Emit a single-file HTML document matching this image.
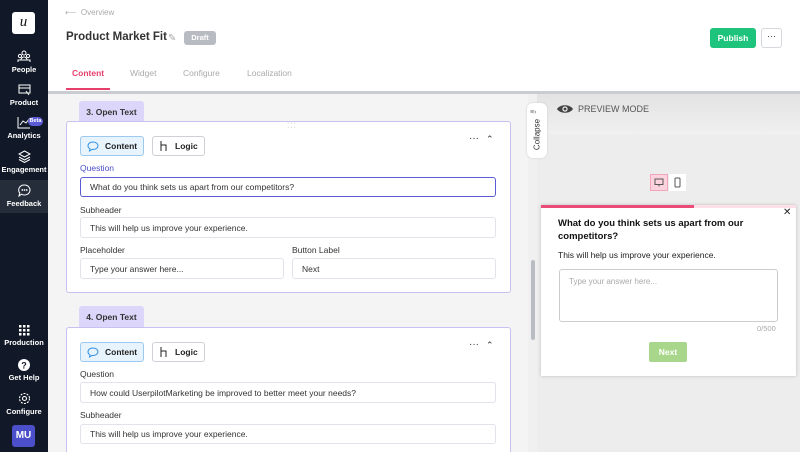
<!DOCTYPE html>
<html style="width:800px;height:452px;overflow:hidden"><head><style>
*{box-sizing:border-box;margin:0;padding:0}
body{width:800px;height:452px;overflow:hidden;font-family:"Liberation Sans",sans-serif;background:#f4f4f5;position:relative}
.a{position:absolute}
.sb{left:0;top:0;width:48px;height:452px;background:#111827}
.ni{position:absolute;left:0;width:48px;text-align:center;color:#fff;font-size:7.5px;font-weight:bold}
.ni svg{display:block;margin:0 auto 2px}
.lbl{font-size:8.5px;color:#333;position:absolute}
.inp{position:absolute;background:#fff;border:1px solid #e2e2ea;border-radius:3px;font-size:8.5px;color:#333;padding-left:9px;display:flex;align-items:center}
.btn{position:absolute;border:1px solid #cfcfd6;border-radius:3px;background:#fff;font-size:8.5px;font-weight:bold;color:#222;display:flex;align-items:center;padding-left:6px;gap:6px}
.tabl{position:absolute;background:#dcd6fa;border-radius:3px 3px 0 0;font-size:8.5px;font-weight:bold;color:#333;display:flex;align-items:center;justify-content:center}
.card{position:absolute;background:#fff;border:1px solid #c7c0f2;border-radius:3px}
</style></head><body>
<div class="a sb"></div>
<div class="a" style="left:12px;top:12px;width:23px;height:22px;background:#fff;border-radius:3px;font-family:'Liberation Serif',serif;font-style:italic;font-size:15px;text-align:center;line-height:20px;color:#111">u</div>
<div class="ni" style="top:50px"><svg width="14" height="13" viewBox="0 0 14 13" fill="none" stroke="#fff" stroke-width="1"><circle cx="7" cy="3" r="2"/><circle cx="3" cy="6" r="1.6"/><circle cx="11" cy="6" r="1.6"/><path d="M1 12v-2h12v2M4 10a3 3 0 0 1 6 0"/></svg>People</div>
<div class="ni" style="top:84px"><svg width="13" height="12" viewBox="0 0 13 12" fill="none" stroke="#fff" stroke-width="1"><rect x="1" y="1" width="11" height="8"/><path d="M1 4h11M8 7l3 4"/></svg>Product</div>
<div class="ni" style="top:116px"><svg width="14" height="13" viewBox="0 0 14 13" fill="none" stroke="#fff" stroke-width="1"><path d="M1 1v11h12M3 9l3-4 3 2 4-5"/></svg>Analytics</div>
<div class="a" style="left:28px;top:117px;width:15px;height:9px;background:#5b5bd6;border-radius:5px;color:#fff;font-size:5.5px;text-align:center;line-height:9px;font-weight:bold">Beta</div>
<div class="ni" style="top:150px"><svg width="13" height="13" viewBox="0 0 13 13" fill="none" stroke="#fff" stroke-width="1"><path d="M6.5 1l5.5 3-5.5 3-5.5-3zM1 7l5.5 3 5.5-3M1 9.5l5.5 3 5.5-3"/></svg>Engagement</div>
<div class="a" style="left:0;top:180px;width:48px;height:33px;background:#252d3a"></div>
<div class="ni" style="top:184px"><svg width="13" height="13" viewBox="0 0 13 13" fill="none" stroke="#fff" stroke-width="1"><path d="M6.5 1a5.5 5 0 1 1-3 9.2L1 12l.8-3A5.5 5 0 0 1 6.5 1z"/><circle cx="4.3" cy="6" r=".4"/><circle cx="6.5" cy="6" r=".4"/><circle cx="8.7" cy="6" r=".4"/></svg>Feedback</div>
<div class="ni" style="top:325px"><svg width="11" height="11" viewBox="0 0 11 11" fill="#fff"><rect x="0" y="0" width="2.5" height="2.5"/><rect x="4" y="0" width="2.5" height="2.5"/><rect x="8" y="0" width="2.5" height="2.5"/><rect x="0" y="4" width="2.5" height="2.5"/><rect x="4" y="4" width="2.5" height="2.5"/><rect x="8" y="4" width="2.5" height="2.5"/><rect x="0" y="8" width="2.5" height="2.5"/><rect x="4" y="8" width="2.5" height="2.5"/><rect x="8" y="8" width="2.5" height="2.5"/></svg>Production</div>
<div class="ni" style="top:359px"><svg width="12" height="12" viewBox="0 0 12 12"><circle cx="6" cy="6" r="6" fill="#fff"/><text x="6" y="9.5" font-size="9" font-weight="bold" text-anchor="middle" fill="#111827" font-family="Liberation Sans">?</text></svg>Get Help</div>
<div class="ni" style="top:392px"><svg width="13" height="13" viewBox="0 0 13 13" fill="none" stroke="#fff" stroke-width="1.1"><circle cx="6.5" cy="6.5" r="2"/><circle cx="6.5" cy="6.5" r="5" stroke-dasharray="2 1.2"/></svg>Configure</div>
<div class="a" style="left:12px;top:425px;width:23px;height:22px;background:#4b4fc9;border-radius:3px;color:#fff;font-size:10px;font-weight:bold;text-align:center;line-height:22px">MU</div>

<div class="a" style="left:48px;top:0;width:752px;height:94px;background:#fff;border-bottom:3px solid #c9ccd1"></div>
<div class="a" style="left:65px;top:8px;font-size:8px;color:#aaa">⟵ &nbsp;Overview</div>
<div class="a" style="left:66px;top:31px;font-size:11.5px;font-weight:bold;color:#333">Product Market Fit</div>
<div class="a" style="left:168px;top:33px;font-size:10px;color:#aaa">✎</div>
<div class="a" style="left:184px;top:31px;width:32px;height:14px;background:#b8bcc2;border-radius:3px;color:#fff;font-size:7.5px;font-weight:bold;text-align:center;line-height:14px">Draft</div>
<div class="a" style="left:710px;top:28px;width:46px;height:20px;background:#1fc47c;border-radius:3px;color:#fff;font-size:8.5px;font-weight:bold;text-align:center;line-height:20px">Publish</div>
<div class="a" style="left:761px;top:28px;width:21px;height:20px;border:1px solid #d5d8dc;border-radius:3px;background:#fff;font-size:9px;text-align:center;line-height:15px;color:#333">···</div>
<div class="a" style="left:72px;top:68px;font-size:8.5px;font-weight:bold;color:#e83e6c">Content</div>
<div class="a" style="left:66px;top:88px;width:44px;height:2px;background:#e83e6c"></div>
<div class="a" style="left:130px;top:68px;font-size:8.5px;color:#aaa">Widget</div>
<div class="a" style="left:183px;top:68px;font-size:8.5px;color:#aaa">Configure</div>
<div class="a" style="left:247px;top:68px;font-size:8.5px;color:#aaa">Localization</div>

<div class="tabl" style="left:79px;top:101px;width:65px;height:21px">3. Open Text</div>
<div class="card" style="left:66px;top:121px;width:445px;height:172px"></div>
<div class="a" style="left:287px;top:122px;font-size:7px;color:#aaa;letter-spacing:1px;line-height:4px">···<br>···</div>
<div class="a" style="left:469px;top:133px;font-size:10px;color:#333">···</div>
<div class="a" style="left:486px;top:134px;font-size:9px;color:#333">⌃</div>
<div class="btn" style="left:80px;top:136px;width:64px;height:20px;background:#e7f3fd;border-color:#9cc9ef"><svg width="12" height="11" viewBox="0 0 12 11" fill="none" stroke="#2f8fe0"><path d="M6 1C3 1 1 2.7 1 4.8c0 1.3.8 2.4 2 3L2.5 10 5 8.5h1c3 0 5-1.7 5-3.7S9 1 6 1z"/></svg>Content</div>
<div class="btn" style="left:152px;top:136px;width:53px;height:20px"><svg width="10" height="12" viewBox="0 0 10 12" fill="none" stroke="#222"><path d="M2 1v10M2 5h5v6"/></svg>Logic</div>
<div class="lbl" style="left:80px;top:163px;color:#4b4fc9">Question</div>
<div class="inp" style="left:80px;top:177px;width:416px;height:20px;border:1.5px solid #5b5bd6">What do you think sets us apart from our competitors?</div>
<div class="lbl" style="left:80px;top:205px">Subheader</div>
<div class="inp" style="left:80px;top:217px;width:416px;height:21px">This will help us improve your experience.</div>
<div class="lbl" style="left:80px;top:245px">Placeholder</div>
<div class="lbl" style="left:292px;top:245px">Button Label</div>
<div class="inp" style="left:80px;top:258px;width:204px;height:21px">Type your answer here...</div>
<div class="inp" style="left:292px;top:258px;width:204px;height:21px">Next</div>

<div class="tabl" style="left:79px;top:306px;width:65px;height:21px">4. Open Text</div>
<div class="card" style="left:66px;top:327px;width:445px;height:125px;border-bottom:none;border-radius:3px 3px 0 0"></div>
<div class="a" style="left:469px;top:339px;font-size:10px;color:#333">···</div>
<div class="a" style="left:486px;top:340px;font-size:9px;color:#333">⌃</div>
<div class="btn" style="left:80px;top:342px;width:64px;height:20px;background:#e7f3fd;border-color:#9cc9ef"><svg width="12" height="11" viewBox="0 0 12 11" fill="none" stroke="#2f8fe0"><path d="M6 1C3 1 1 2.7 1 4.8c0 1.3.8 2.4 2 3L2.5 10 5 8.5h1c3 0 5-1.7 5-3.7S9 1 6 1z"/></svg>Content</div>
<div class="btn" style="left:152px;top:342px;width:53px;height:20px"><svg width="10" height="12" viewBox="0 0 10 12" fill="none" stroke="#222"><path d="M2 1v10M2 5h5v6"/></svg>Logic</div>
<div class="lbl" style="left:80px;top:369px">Question</div>
<div class="inp" style="left:80px;top:382px;width:416px;height:21px">How could UserpilotMarketing be improved to better meet your needs?</div>
<div class="lbl" style="left:80px;top:410px">Subheader</div>
<div class="inp" style="left:80px;top:424px;width:416px;height:20px">This will help us improve your experience.</div>

<div class="a" style="left:528px;top:94px;width:9px;height:358px;background:#f0f0f0"></div>
<div class="a" style="left:531px;top:260px;width:4px;height:80px;background:#b9bcc2;border-radius:2px"></div>
<div class="a" style="left:537px;top:94px;width:263px;height:358px;background:#ededed"></div>
<div class="a" style="left:537px;top:94px;width:263px;height:40px;background:linear-gradient(#e3e3e3,#f0f0f0)"></div>
<svg class="a" style="left:556px;top:103px" width="18" height="12" viewBox="0 0 18 12"><path d="M1 6C4 1 14 1 17 6 14 11 4 11 1 6z" fill="#444"/><circle cx="9" cy="6" r="2.6" fill="#fff"/><circle cx="9" cy="6" r="1.5" fill="#444"/></svg>
<div class="a" style="left:578px;top:104px;font-size:9px;color:#555">PREVIEW MODE</div>
<div class="a" style="left:527px;top:103px;width:20px;height:55px;background:#fff;border-radius:6px;box-shadow:0 0 2px #ccc"></div>
<div class="a" style="left:530px;top:109px;font-size:7px;color:#666">≡›</div>
<div class="a" style="left:520px;top:130px;font-size:8px;color:#333;transform:rotate(-90deg);width:34px;text-align:center">Collapse</div>
<div class="a" style="left:650px;top:174px;width:18px;height:17px;background:#fbd3de;border:1px solid #f3a5bb"></div>
<svg class="a" style="left:654px;top:178px" width="10" height="9" viewBox="0 0 10 9" fill="none" stroke="#555"><rect x="1" y="1" width="8" height="5.5"/><path d="M5 6.5v2"/></svg>
<div class="a" style="left:669px;top:174px;width:17px;height:17px;background:#fff"></div>
<svg class="a" style="left:674px;top:177px" width="7" height="11" viewBox="0 0 7 11" fill="none" stroke="#555"><rect x="1" y="1" width="5" height="9" rx="1"/></svg>
<div class="a" style="left:541px;top:205px;width:255px;height:171px;background:#fff;box-shadow:0 0 3px #bbb"></div>
<div class="a" style="left:541px;top:205px;width:255px;height:3px;background:#fde0e8"></div>
<div class="a" style="left:541px;top:205px;width:153px;height:3px;background:#ea4c78"></div>
<div class="a" style="left:783px;top:207px;font-size:10px;color:#222">✕</div>
<div class="a" style="left:558px;top:218px;width:200px;font-size:9.5px;font-weight:bold;color:#111;line-height:12.5px">What do you think sets us apart from our competitors?</div>
<div class="a" style="left:558px;top:250px;font-size:8.5px;color:#222">This will help us improve your experience.</div>
<div class="a" style="left:559px;top:269px;width:219px;height:53px;border:1px solid #ccc;border-radius:3px;font-size:8px;color:#aaa;padding:7px 9px">Type your answer here...</div>
<div class="a" style="left:757px;top:324px;font-size:7.5px;color:#aaa">0/500</div>
<div class="a" style="left:649px;top:342px;width:38px;height:20px;background:#a8d78b;border-radius:2px;color:#fff;font-size:8.5px;font-weight:bold;text-align:center;line-height:20px">Next</div>
</body></html>
